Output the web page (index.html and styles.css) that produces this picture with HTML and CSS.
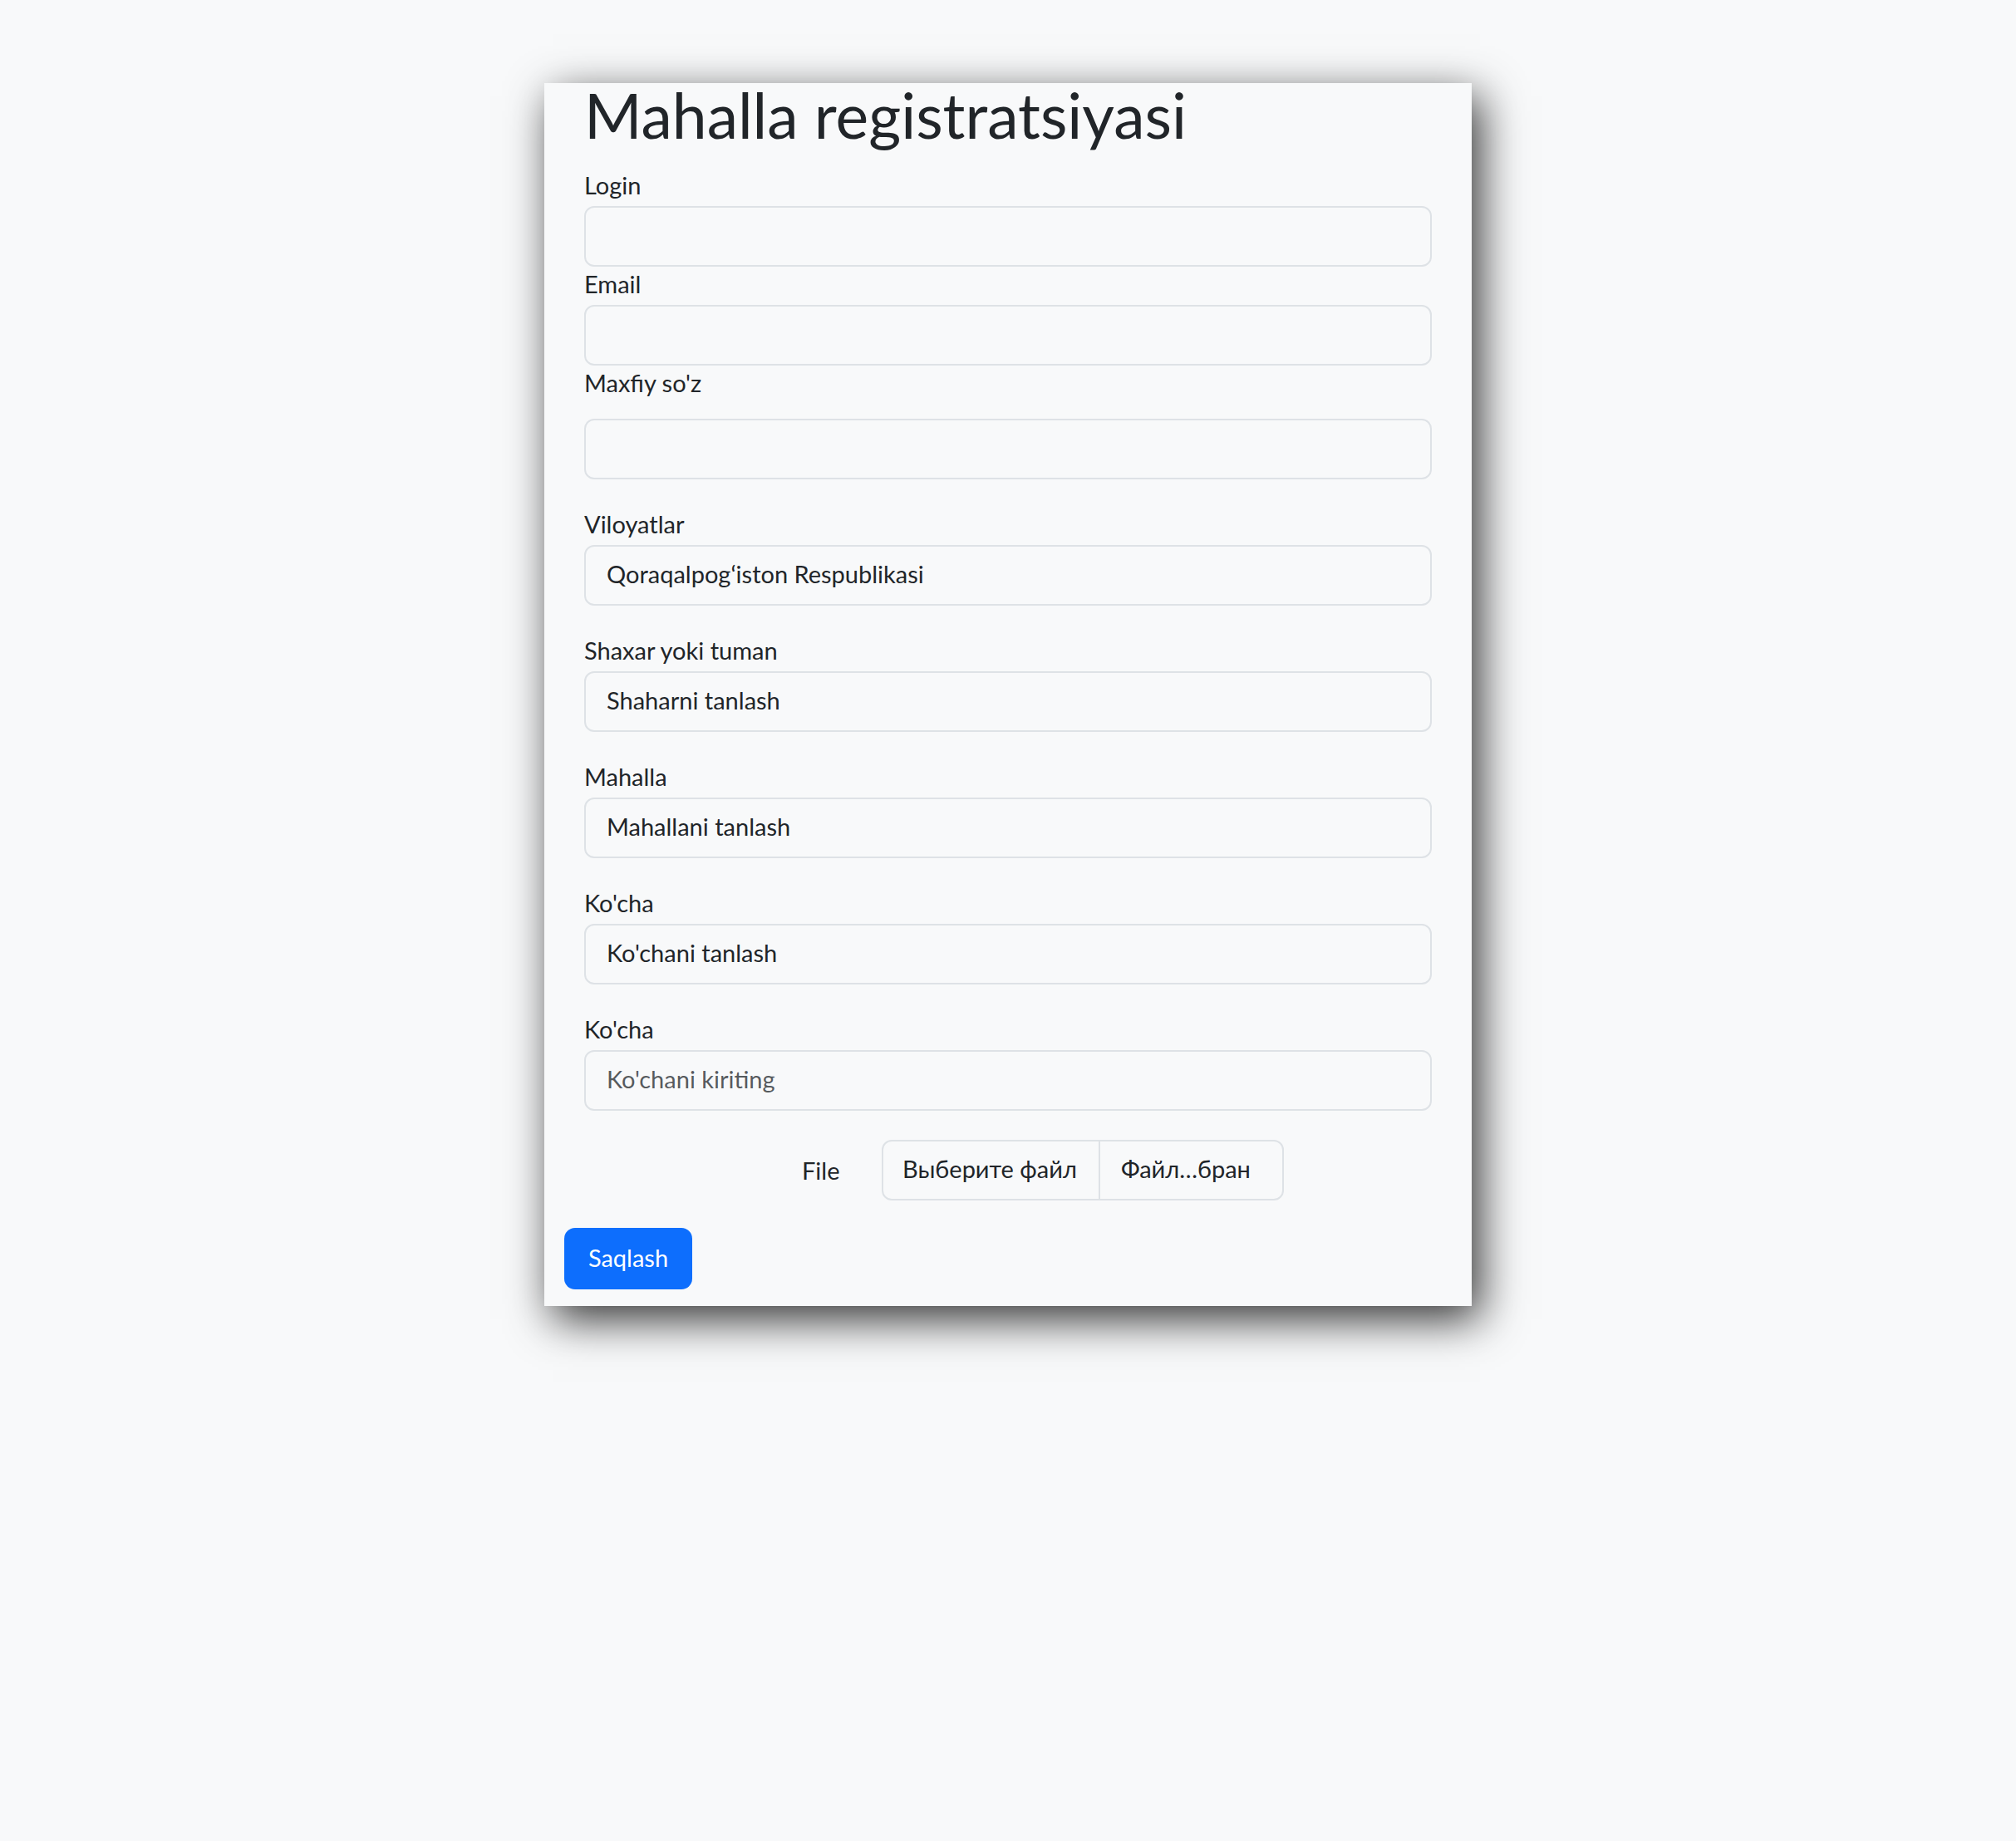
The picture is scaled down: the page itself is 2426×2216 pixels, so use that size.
FILE: index.html
```html
<!DOCTYPE html>
<html lang="uz">
<head>
<meta charset="utf-8">
<title>Mahalla registratsiyasi</title>
<link rel="stylesheet" href="styles.css">
</head>
<body>
<main class="card">
  <h1 class="title">Mahalla registratsiyasi</h1>
  <form class="form">
    <div class="group">
      <label class="label" for="login">Login</label>
      <input class="field" id="login" type="text">
    </div>
    <div class="group">
      <label class="label" for="email">Email</label>
      <input class="field" id="email" type="email">
    </div>
    <div class="group group-pass">
      <label class="label" for="pass">Maxfiy so'z</label>
      <input class="field field-pass" id="pass" type="password">
    </div>
    <div class="group group-sel">
      <label class="label" for="vil">Viloyatlar</label>
      <select class="field select" id="vil"><option>Qoraqalpog‘iston Respublikasi</option></select>
    </div>
    <div class="group group-sel">
      <label class="label" for="shahar">Shaxar yoki tuman</label>
      <select class="field select" id="shahar"><option>Shaharni tanlash</option></select>
    </div>
    <div class="group group-sel">
      <label class="label" for="mahalla">Mahalla</label>
      <select class="field select" id="mahalla"><option>Mahallani tanlash</option></select>
    </div>
    <div class="group group-sel">
      <label class="label" for="kocha">Ko'cha</label>
      <select class="field select" id="kocha"><option>Ko'chani tanlash</option></select>
    </div>
    <div class="group group-last">
      <label class="label" for="kocha2">Ko'cha</label>
      <input class="field" id="kocha2" type="text" placeholder="Ko'chani kiriting">
    </div>
    <div class="file-row">
      <span class="file-label">File</span>
      <div class="file-box">
        <span class="file-btn">Выберите файл</span>
        <span class="file-name">Файл…бран</span>
      </div>
    </div>
    <button class="btn" type="button">Saqlash</button>
  </form>
</main>
</body>
</html>
```
FILE: styles.css
```css
* { box-sizing: border-box; }
html, body { margin: 0; min-height: 100%; }
html { height: 100%; }
body {
  min-height: 2216px;
  padding-top: 100px;
  background: #f8f9fa;
  color: #212529;
  font-family: "Lato", "Noto Sans", sans-serif;
  font-size: 29px;
}
.card {
  width: 1116px;
  margin: 0 auto;
  padding: 0 24px 20px;
  background: #f8f9fa;
  box-shadow: 10px 16px 50px rgba(0, 0, 0, 0.8);
}
.title {
  margin: 0 0 26px 24px;
  font-size: 75px;
  font-weight: 400;
  line-height: 76px;
}
.form { display: flex; flex-direction: column; }
.group { margin: 0 24px; display: flex; flex-direction: column; }
.label {
  display: block;
  height: 46px;
  line-height: 42px;
  padding-bottom: 4px;
}
.group-pass .label { margin-bottom: 18px; }
.group-pass { margin-bottom: 33px; }
.group-sel { margin-bottom: 33px; }
.group-last { margin-bottom: 35px; }
.field {
  display: block;
  width: 100%;
  height: 73px;
  padding: 0 25px 4px;
  font: inherit;
  color: #212529;
  background: #f8f9fa;
  border: 2px solid #dee2e6;
  border-radius: 12px;
  outline: none;
}
.select {
  appearance: none;
  -webkit-appearance: none;
}
.field::placeholder { color: rgba(33, 37, 41, 0.75); }
.file-row {
  display: flex;
  align-items: center;
  margin: 0 0 33px 286px;
}
.file-label { width: 96px; }
.file-box {
  display: flex;
  width: 484px;
  height: 73px;
  border: 2px solid #dee2e6;
  border-radius: 12px;
  align-items: stretch;
}
.file-btn {
  display: flex;
  align-items: center;
  padding: 0 26px 4px 23px;
  border-right: 2px solid #dee2e6;
}
.file-name {
  display: flex;
  align-items: center;
  padding: 0 0 4px 25px;
}
.btn {
  align-self: flex-start;
  min-width: 154px;
  height: 74px;
  padding: 0 26px 4px;
  font: inherit;
  color: #fff;
  background: #0d6efd;
  border: none;
  border-radius: 13px;
}
```
